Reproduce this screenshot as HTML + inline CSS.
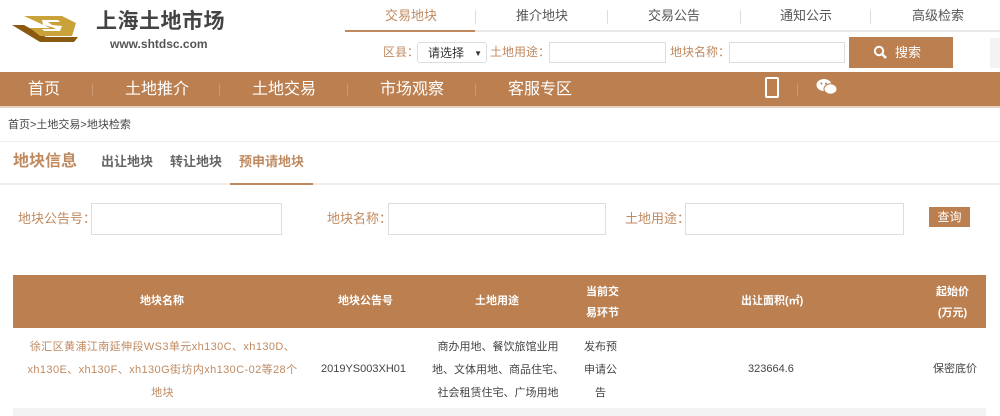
<!DOCTYPE html>
<html><head><meta charset="utf-8"><style>
*{margin:0;padding:0;box-sizing:border-box}
body{width:1000px;height:416px;overflow:hidden;background:#fff;font-family:"Liberation Sans","Noto Sans CJK SC",sans-serif;color:#333;position:relative}
.a{position:absolute;white-space:nowrap}
.br{background:#bb7f50}
.inp{position:absolute;border:1px solid #ddd;background:#fff}
.sep{position:absolute;width:1px;background:#ddd}
.lab{color:#c08a60;font-size:12px}
.nv{position:absolute;top:72px;line-height:36px;font-size:16px;color:#fff}
</style></head><body>
<svg class="a" style="left:10px;top:12px" width="72" height="36" viewBox="0 0 72 36">
<polygon points="2,13 30,30 64,30 68,25 36,25 14,13" fill="#8a5a10"/>
<polygon points="14,4 52,4 66,11 62,24 30,24 20,16 40,16" fill="#c9a23a"/>
<polygon points="32,8 48,8 50,10 38,10 42,13 52,14 50,19 34,19 32,17 46,17 42,15 33,13" fill="#fff"/>
</svg>
<div class="a" style="left:96px;top:8px;font-size:21px;line-height:28px;font-weight:bold;color:#444;letter-spacing:0.5px">上海土地市场</div>
<div class="a" style="left:110px;top:37px;font-size:12px;line-height:14px;font-weight:bold;color:#555">www.shtdsc.com</div>
<div class="a" style="left:345px;top:30px;width:655px;height:2px;background:#e8e8e8"></div>
<div class="a" style="left:345px;top:30px;width:130px;height:2px;background:#c08a60"></div>
<div class="a" style="left:385px;top:7px;font-size:13px;line-height:18px;color:#c08a60">交易地块</div>
<div class="a" style="left:516px;top:7px;font-size:13px;line-height:18px;color:#555">推介地块</div>
<div class="a" style="left:648px;top:7px;font-size:13px;line-height:18px;color:#555">交易公告</div>
<div class="a" style="left:780px;top:7px;font-size:13px;line-height:18px;color:#555">通知公示</div>
<div class="a" style="left:912px;top:7px;font-size:13px;line-height:18px;color:#555">高级检索</div>
<div class="sep" style="left:475px;top:10px;height:14px"></div>
<div class="sep" style="left:607px;top:10px;height:14px"></div>
<div class="sep" style="left:740px;top:10px;height:14px"></div>
<div class="sep" style="left:870px;top:10px;height:14px"></div>
<div class="a lab" style="left:383px;top:44px;line-height:16px">区县：</div>
<div class="inp" style="left:417px;top:42px;width:70px;height:21px;border-radius:3px;font-size:12px;padding:3px 0 0 10px;line-height:14px">请选择<span style="position:absolute;right:4px;top:4px;font-size:8px">▼</span></div>
<div class="a lab" style="left:490px;top:44px;line-height:16px">土地用途：</div>
<div class="inp" style="left:549px;top:42px;width:117px;height:21px"></div>
<div class="a lab" style="left:670px;top:44px;line-height:16px">地块名称：</div>
<div class="inp" style="left:729px;top:42px;width:116px;height:21px"></div>
<div class="a br" style="left:849px;top:37px;width:104px;height:31px;color:#fff;font-size:13px;line-height:31px;padding-left:24px">
<svg width="14" height="14" style="vertical-align:-2px;margin-right:8px" viewBox="0 0 14 14"><circle cx="6" cy="6" r="4.2" stroke="#fff" stroke-width="2" fill="none"/><line x1="9" y1="9" x2="13" y2="13" stroke="#fff" stroke-width="2.4"/></svg>搜索</div>
<div class="a" style="left:990px;top:38px;width:10px;height:30px;background:#f3f3f3"></div>
<div class="a br" style="left:0;top:72px;width:1000px;height:35px"></div>
<div class="a" style="left:0;top:106px;width:1000px;height:2px;background:#e5d3c3"></div>
<div class="nv" style="left:28px">首页</div>
<div class="nv" style="left:125px">土地推介</div>
<div class="nv" style="left:252px">土地交易</div>
<div class="nv" style="left:380px">市场观察</div>
<div class="nv" style="left:508px">客服专区</div>
<div class="sep" style="left:92px;top:84px;height:12px;background:#c99a75"></div>
<div class="sep" style="left:219px;top:84px;height:12px;background:#c99a75"></div>
<div class="sep" style="left:347px;top:84px;height:12px;background:#c99a75"></div>
<div class="sep" style="left:475px;top:84px;height:12px;background:#c99a75"></div>
<div class="sep" style="left:797px;top:84px;height:12px;background:#c99a75"></div>
<div class="a" style="left:765px;top:77px;width:14px;height:21px;border:2px solid #fff;border-radius:2px"></div>
<svg class="a" style="left:816px;top:78px" width="22" height="18" viewBox="0 0 22 18"><ellipse cx="8" cy="7" rx="7.5" ry="6" fill="#fff"/><ellipse cx="14.5" cy="11" rx="6.5" ry="5.2" fill="#fff" stroke="#bb7f50" stroke-width="1"/><circle cx="5.5" cy="5.5" r="1" fill="#bb7f50"/><circle cx="10" cy="5.5" r="1" fill="#bb7f50"/></svg>
<div class="a" style="left:8px;top:118px;font-size:11px;line-height:14px;color:#444">首页&gt;土地交易&gt;地块检索</div>
<div class="a" style="left:0;top:141px;width:1000px;height:1px;background:#eee"></div>
<div class="a" style="left:13px;top:151px;font-size:16px;line-height:22px;font-weight:bold;color:#c08a60">地块信息</div>
<div class="a" style="left:101px;top:153px;font-size:13px;line-height:18px;color:#666;font-weight:bold">出让地块</div>
<div class="a" style="left:170px;top:153px;font-size:13px;line-height:18px;color:#666;font-weight:bold">转让地块</div>
<div class="a" style="left:239px;top:153px;font-size:13px;line-height:18px;color:#c08a60;font-weight:bold">预申请地块</div>
<div class="a" style="left:0;top:183px;width:1000px;height:2px;background:#eee"></div>
<div class="a" style="left:230px;top:183px;width:83px;height:2px;background:#c08a60"></div>
<div class="a lab" style="left:18px;top:210px;font-size:13px;line-height:18px">地块公告号：</div>
<div class="inp" style="left:91px;top:203px;width:191px;height:32px"></div>
<div class="a lab" style="left:327px;top:210px;font-size:13px;line-height:18px">地块名称：</div>
<div class="inp" style="left:388px;top:203px;width:218px;height:32px"></div>
<div class="a lab" style="left:625px;top:210px;font-size:13px;line-height:18px">土地用途：</div>
<div class="inp" style="left:685px;top:203px;width:219px;height:32px"></div>
<div class="a br" style="left:929px;top:207px;width:41px;height:20px;color:#fff;font-size:12px;text-align:center;line-height:20px">查询</div>
<div class="a br" style="left:13px;top:275px;width:973px;height:53px"></div>
<div class="a" style="left:13px;top:408px;width:973px;height:8px;background:#f3f3f3"></div>
<div class="a" style="left:140px;top:294px;font-size:11px;line-height:14px;color:#fff;font-weight:bold">地块名称</div>
<div class="a" style="left:338px;top:294px;font-size:11px;line-height:14px;color:#fff;font-weight:bold">地块公告号</div>
<div class="a" style="left:475px;top:294px;font-size:11px;line-height:14px;color:#fff;font-weight:bold">土地用途</div>
<div class="a" style="left:586px;top:282px;font-size:11px;color:#fff;font-weight:bold;line-height:21px;text-align:center">当前交<br>易环节</div>
<div class="a" style="left:741px;top:294px;font-size:11px;line-height:14px;color:#fff;font-weight:bold">出让面积(㎡)</div>
<div class="a" style="left:936px;top:282px;font-size:11px;color:#fff;font-weight:bold;line-height:21px;text-align:center">起始价<br>(万元)</div>
<div class="a" style="left:13px;top:336px;width:299px;font-size:11px;color:#c08a60;line-height:23px;text-align:center;letter-spacing:0.4px">徐汇区黄浦江南延伸段WS3单元xh130C、xh130D、<br>xh130E、xh130F、xh130G街坊内xh130C-02等28个<br>地块</div>
<div class="a" style="left:321px;top:362px;font-size:11px;line-height:14px;color:#444">2019YS003XH01</div>
<div class="a" style="left:430px;top:336px;width:136px;font-size:11px;color:#444;line-height:23px;text-align:center">商办用地、餐饮旅馆业用<br>地、文体用地、商品住宅、<br>社会租赁住宅、广场用地</div>
<div class="a" style="left:584px;top:336px;font-size:11px;color:#444;line-height:23px;text-align:center">发布预<br>申请公<br>告</div>
<div class="a" style="left:748px;top:362px;font-size:11px;line-height:14px;color:#444">323664.6</div>
<div class="a" style="left:933px;top:362px;font-size:11px;line-height:14px;color:#444">保密底价</div>
</body></html>
